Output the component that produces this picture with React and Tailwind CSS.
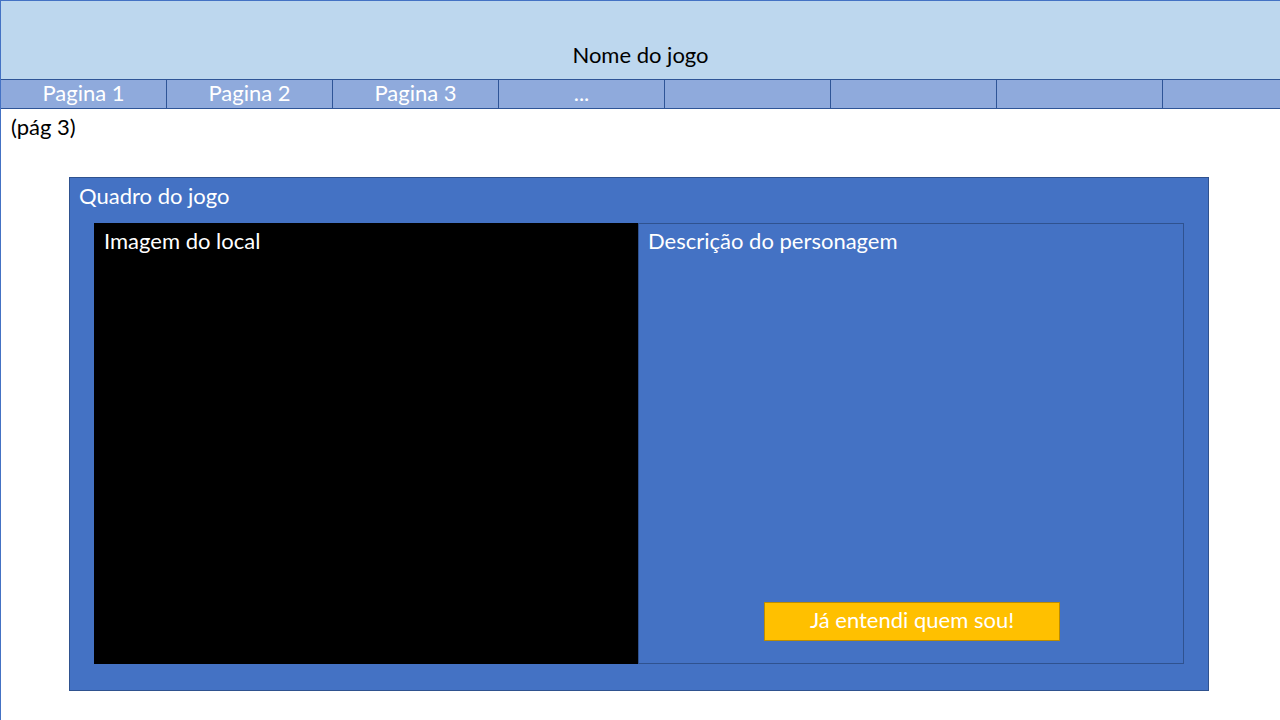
const pages = ["Pagina 1", "Pagina 2", "Pagina 3", "...", "", "", "", ""];

const App = () => {
  return (
    <div
      className="w-[1280px] h-[720px] bg-white border-l border-[#4472C4] overflow-hidden flex flex-col"
      style={{ fontFamily: "Lato, 'Open Sans', sans-serif" }}
    >
      <div className="h-[79px] shrink-0 bg-[#BDD7EE] border-t border-[#4472C4] flex items-end justify-center pb-[11px]">
        <span className="text-[22px] leading-[26px] text-black">Nome do jogo</span>
      </div>

      <div className="h-[30px] shrink-0 bg-[#8FAADC] border-y border-[#2F5597] flex">
        {pages.map((p, i) => (
          <div
            key={i}
            className="w-[166px] shrink-0 border-r border-[#2F5597] flex items-center justify-center pb-[3px] text-white text-[22px] leading-none"
          >
            {p}
          </div>
        ))}
      </div>

      <p className="pl-[10px] pt-[5px] text-[22px] leading-[26px] text-black">(pág 3)</p>

      <div className="ml-[68px] mt-[37px] w-[1140px] h-[514px] bg-[#4472C4] border border-[#2F528F] flex flex-col">
        <p className="pl-[9px] pt-[5px] h-[45px] text-white text-[22px] leading-[26px]">Quadro do jogo</p>
        <div className="ml-[24px] flex h-[441px]">
          <div className="w-[544px] bg-black px-[10px] pt-[5px]">
            <p className="text-white text-[22px] leading-[26px]">Imagem do local</p>
          </div>
          <div className="w-[546px] border border-[#2F528F] flex flex-col">
            <p className="px-[9px] pt-[4px] text-white text-[22px] leading-[26px]">Descrição do personagem</p>
            <button className="mt-auto mb-[22px] ml-[125px] w-[296px] h-[39px] bg-[#FFC000] border border-[#BC8C00] text-white text-[22px] leading-none flex items-center justify-center pb-[3px]">
              Já entendi quem sou!
            </button>
          </div>
        </div>
      </div>
    </div>
  );
};

export default App;
